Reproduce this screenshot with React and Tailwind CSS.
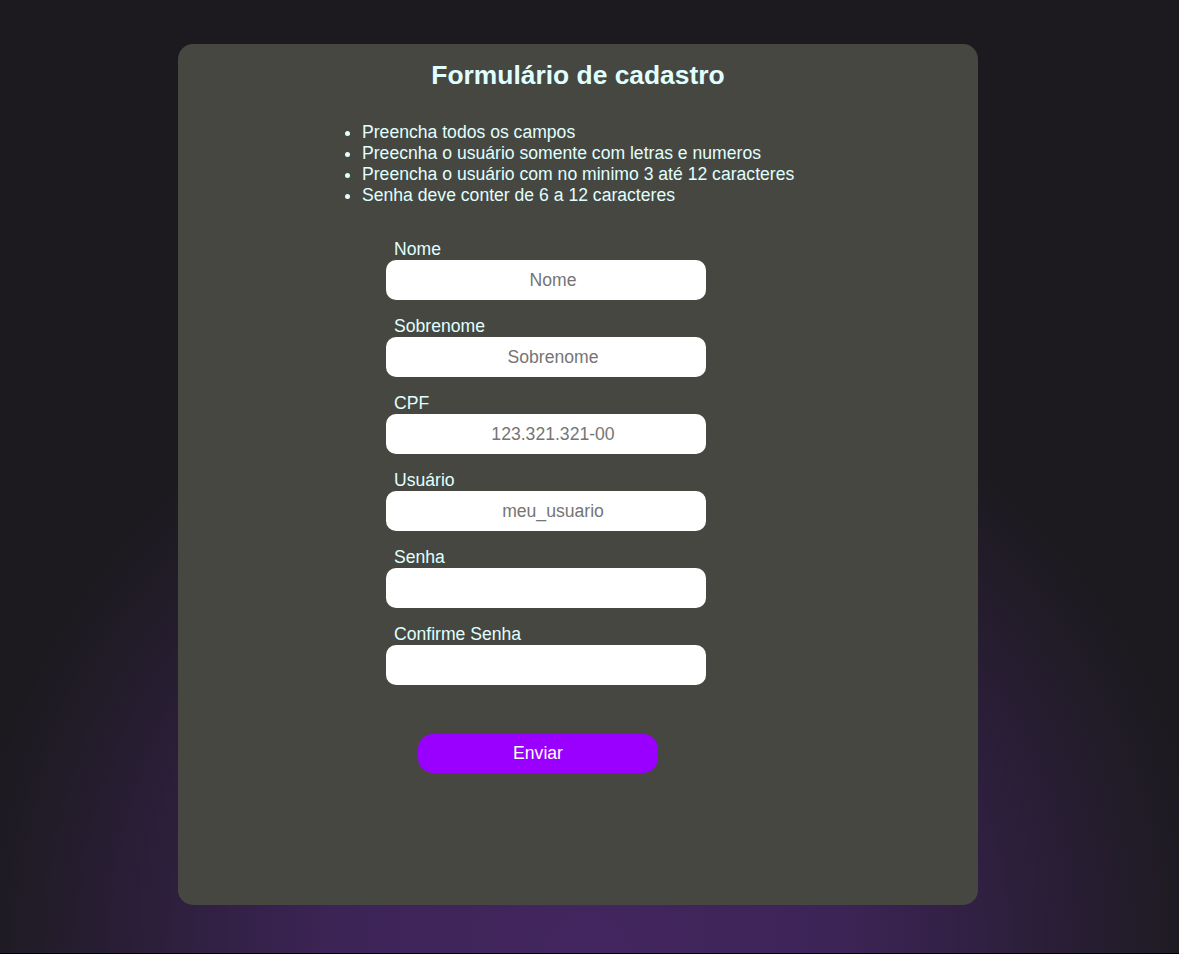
import React from "react";

const fields = [
  { label: "Nome", placeholder: "Nome", type: "text" },
  { label: "Sobrenome", placeholder: "Sobrenome", type: "text" },
  { label: "CPF", placeholder: "123.321.321-00", type: "text" },
  { label: "Usuário", placeholder: "meu_usuario", type: "text" },
  { label: "Senha", placeholder: "", type: "password" },
  { label: "Confirme Senha", placeholder: "", type: "password" },
];

export default function App() {
  return (
    <div className="bg-black h-[954px] w-full">
      <div
        className="h-[953px] w-full bg-[radial-gradient(circle_620px_at_50%_100%,#43265f_0%,#3d2457_40%,#1c1a1f_100%)] pt-[44px] text-[17.6px] text-[#e0ffff]"
        style={{ fontFamily: '"Liberation Sans", Arial, sans-serif' }}
      >
        <div className="ml-[178px] w-[800px] h-[861px] rounded-[15px] bg-[#474741] pt-[16px] flex flex-col">
          <h1 className="text-center font-bold text-[26.4px] leading-[30px]">
            Formulário de cadastro
          </h1>
          <ul className="list-disc mt-[32px] ml-[144px] pl-[40px] leading-[21px]">
            <li>Preencha todos os campos</li>
            <li>Preecnha o usuário somente com letras e numeros</li>
            <li>Preencha o usuário com no minimo 3 até 12 caracteres</li>
            <li>Senha deve conter de 6 a 12 caracteres</li>
          </ul>
          <form className="ml-[208px] mt-[32px] flex flex-col gap-[15px] w-[320px]">
            {fields.map((f) => (
              <div key={f.label} className="flex flex-col">
                <label className="ml-[8px] leading-[20px] pt-[1px] mb-[1px]">{f.label}</label>
                <input
                  type={f.type}
                  placeholder={f.placeholder}
                  className="h-[40px] w-[320px] rounded-[10px] bg-white pl-4 pr-[2px] text-center text-[17.6px] text-black placeholder:text-[#757575] outline-none border-0"
                />
              </div>
            ))}
          </form>
          <button
            type="button"
            className="ml-[240px] mt-[49px] h-[39px] w-[240px] rounded-[15px] bg-[#9900ff] text-white text-[17.6px]"
          >
            Enviar
          </button>
        </div>
      </div>
    </div>
  );
}
